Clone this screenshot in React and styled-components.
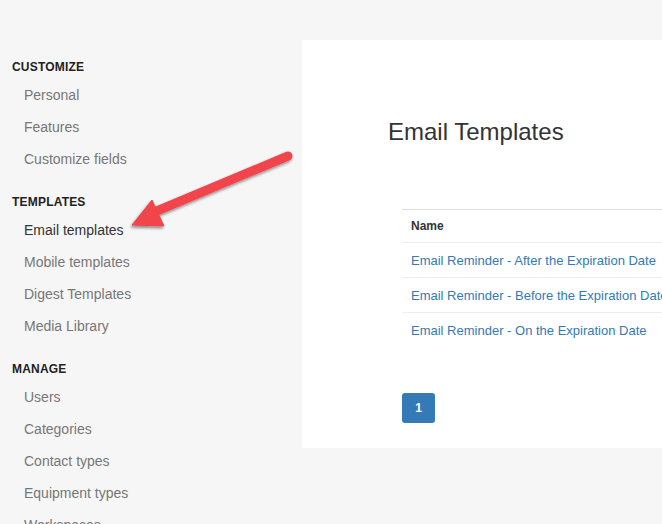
import React from 'react'
import styled, { createGlobalStyle } from 'styled-components'

const GlobalStyle = createGlobalStyle`
    html, body {
        margin: 0;
        padding: 0;
        background: #f6f6f6;
        overflow: hidden;
    }
    body {
        font-family: "Liberation Sans", Arial, sans-serif;
    }
`

const Page = styled.div`
    position: relative;
    display: flex;
    width: 662px;
    height: 524px;
    overflow: hidden;
`

const Sidebar = styled.nav`
    width: 302px;
    flex-shrink: 0;
    padding-top: 57px;
    box-sizing: border-box;
`

const SectionTitle = styled.div`
    margin: ${props => (props.first ? '0' : '17px')} 0 2px 12px;
    height: 20px;
    line-height: 20px;
    font-size: 12px;
    font-weight: bold;
    color: #222;
    letter-spacing: 0.2px;
`

const NavItem = styled.div`
    height: 32px;
    line-height: 32px;
    padding-left: 24px;
    font-size: 14px;
    color: ${props => (props.active ? '#333' : '#777')};
`

const Panel = styled.main`
    margin-top: 40px;
    height: 408px;
    flex: 1;
    background: #fff;
    padding: 76px 0 0 86px;
    box-sizing: border-box;
    overflow: hidden;
`

const Title = styled.h1`
    margin: 0;
    font-size: 24px;
    font-weight: normal;
    color: #333;
    line-height: 32px;
`

const Table = styled.table`
    margin: 61px 0 0 14px;
    width: 420px;
    border-collapse: collapse;
    font-size: 13px;
`

const HeadCell = styled.th`
    text-align: left;
    font-size: 12px;
    font-weight: bold;
    color: #333;
    height: 32px;
    padding: 0 9px;
    border-top: 1px solid #ddd;
    border-bottom: 1px solid #eceff2;
`

const Cell = styled.td`
    height: 34px;
    padding: 0 9px;
    border-bottom: 1px solid #eceff2;
    white-space: nowrap;
`

const LastCell = styled(Cell)`
    border-bottom: none;
`

const Link = styled.a`
    color: #337ab7;
    text-decoration: none;
`

const Pager = styled.div`
    display: flex;
    margin: 46px 0 0 14px;
`

const PageButton = styled.button`
    width: 33px;
    height: 30px;
    border: none;
    border-radius: 3px;
    background: #337ab7;
    color: #fff;
    font-family: "Liberation Sans", Arial, sans-serif;
    font-size: 12px;
    font-weight: bold;
    padding: 0;
`

const ArrowLayer = styled.svg`
    position: absolute;
    left: 0;
    top: 0;
    pointer-events: none;
`

const sections = [
    { title: 'CUSTOMIZE', items: ['Personal', 'Features', 'Customize fields'] },
    { title: 'TEMPLATES', items: ['Email templates', 'Mobile templates', 'Digest Templates', 'Media Library'] },
    { title: 'MANAGE', items: ['Users', 'Categories', 'Contact types', 'Equipment types', 'Workspaces'] },
]

const templates = [
    'Email Reminder - After the Expiration Date',
    'Email Reminder - Before the Expiration Date',
    'Email Reminder - On the Expiration Date',
]

export default function App() {
    return (
        <Page>
            <GlobalStyle />
            <Sidebar>
                {sections.map((section, i) => (
                    <div key={section.title}>
                        <SectionTitle first={i === 0}>{section.title}</SectionTitle>
                        {section.items.map(item => (
                            <NavItem key={item} active={item === 'Email templates'}>{item}</NavItem>
                        ))}
                    </div>
                ))}
            </Sidebar>
            <Panel>
                <Title>Email Templates</Title>
                <Table>
                    <thead>
                        <tr><HeadCell>Name</HeadCell></tr>
                    </thead>
                    <tbody>
                        {templates.map((name, i) => {
                            const C = i === templates.length - 1 ? LastCell : Cell
                            return (
                                <tr key={name}>
                                    <C><Link href="#">{name}</Link></C>
                                </tr>
                            )
                        })}
                    </tbody>
                </Table>
                <Pager>
                    <PageButton>1</PageButton>
                </Pager>
            </Panel>
            <ArrowLayer width="662" height="524">
                <defs>
                    <filter id="shadow" x="-20%" y="-20%" width="140%" height="140%">
                        <feDropShadow dx="-1" dy="2" stdDeviation="1.6" floodColor="#000" floodOpacity="0.45" />
                    </filter>
                </defs>
                <g filter="url(#shadow)" fill="#f2444b" stroke="#f2444b">
                    <line x1="288" y1="156" x2="152" y2="213" strokeWidth="9" strokeLinecap="round" />
                    <polygon points="132,225 152,200 164,226" strokeWidth="1" strokeLinejoin="round" />
                </g>
            </ArrowLayer>
        </Page>
    )
}
